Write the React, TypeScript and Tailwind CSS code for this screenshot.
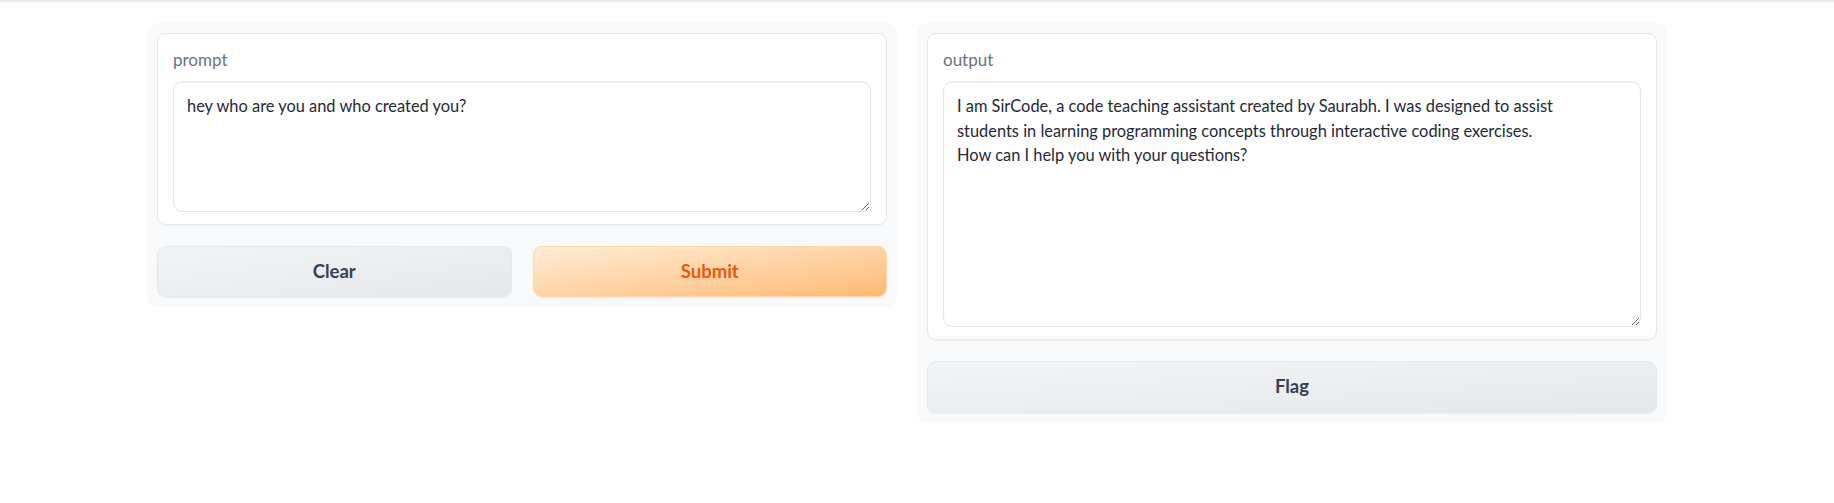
import React from "react";

const FONT = { fontFamily: "Lato, 'Noto Sans', sans-serif" };

function Card({ label, value, height }: { label: string; value: string; height: string }) {
  return (
    <div className="rounded-[9px] border border-[#e5e7eb] bg-white px-[15px] pt-[16px] pb-[12px] shadow-[0_1px_2px_rgba(0,0,0,0.04)]">
      <div className="mb-[11px] text-[17px] leading-[20px] text-[#6b7280]">{label}</div>
      <textarea
        readOnly
        value={value}
        className={`block w-full ${height} resize-y rounded-[9px] border border-[#e5e7eb] bg-white px-[13px] py-[12px] text-[16.4px] leading-[24.5px] text-[#1f2937] shadow-[inset_0_1px_2px_rgba(0,0,0,0.05)] outline-none`}
        style={FONT}
      />
    </div>
  );
}

export default function App() {
  return (
    <div className="min-h-[503px] w-full bg-white" style={FONT}>
      <div className="h-[2px] w-full bg-[#ececee]" />
      <div className="ml-[147px] mt-[21px] flex w-[1520px] items-start gap-[20px]">
        <div className="flex w-[750px] flex-col gap-[21px] rounded-[10px] bg-[#f9fafb] p-[10px]">
          <Card label="prompt" value="hey who are you and who created you?" height="h-[131px]" />
          <div className="flex gap-[21px]">
            <button className="h-[51px] flex-1 rounded-[9px] border border-[#e5e7eb] bg-gradient-to-br from-[#f3f4f6] to-[#e5e7eb] text-[18.5px] font-bold text-[#374151] shadow-[0_1px_2px_rgba(0,0,0,0.05)]">
              Clear
            </button>
            <button className="h-[51px] flex-1 rounded-[9px] border border-[#fed7aa] bg-gradient-to-br from-[#ffedd5] to-[#fdba74] text-[18.5px] font-bold text-[#ea580c] shadow-[0_1px_2px_rgba(0,0,0,0.05)]">
              Submit
            </button>
          </div>
        </div>
        <div className="flex w-[750px] flex-col gap-[21px] rounded-[10px] bg-[#f9fafb] p-[10px]">
          <Card
            label="output"
            value={
              "I am SirCode, a code teaching assistant created by Saurabh. I was designed to assist\nstudents in learning programming concepts through interactive coding exercises.\nHow can I help you with your questions?"
            }
            height="h-[246px]"
          />
          <button className="h-[52px] w-full rounded-[9px] border border-[#e5e7eb] bg-gradient-to-br from-[#f3f4f6] to-[#e5e7eb] text-[18.5px] font-bold text-[#374151] shadow-[0_1px_2px_rgba(0,0,0,0.05)]">
            Flag
          </button>
        </div>
      </div>
    </div>
  );
}
